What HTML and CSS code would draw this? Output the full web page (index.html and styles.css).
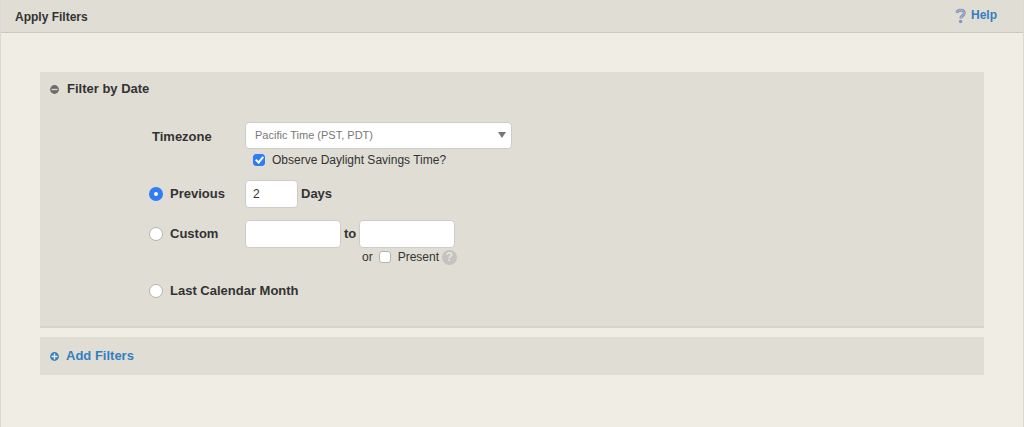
FILE: index.html
```
<!DOCTYPE html>
<html lang="en">
<head>
<meta charset="utf-8">
<meta name="viewport" content="width=device-width, initial-scale=1">
<title>Apply Filters</title>
<link rel="stylesheet" href="styles.css">
</head>
<body>
<div class="frame">
  <header class="topbar">
    <h1 class="title">Apply Filters</h1>
    <a class="help" href="#help">
      <svg class="help-icon" width="12" height="16" viewBox="0 0 12 16" aria-hidden="true">
        <path d="M2 5C2.200 3 3.600 2.200 5.600 2.200c2.200 0 3.700 1 3.700 2.900 0 2.700-3.500 2.500-3.500 5.300" fill="none" stroke="#8496b8" stroke-width="3"/>
        <path d="M2 4.700C2.200 3 3.600 2.200 5.600 2.200c2.200 0 3.700 1 3.700 2.900 0 2.700-3.500 2.500-3.500 5" fill="none" stroke="#b3bed0" stroke-width="1"/>
        <circle cx="5.600" cy="13.500" r="1.700" fill="#8496b8"/>
      </svg>
      <span>Help</span>
    </a>
  </header>
  <main class="content">
    <section class="panel panel-date">
      <h2 class="panel-title">
        <button class="toggle" type="button" aria-label="Collapse date filter">
          <svg width="9" height="9" viewBox="0 0 9 9" aria-hidden="true"><circle cx="4.500" cy="4.500" r="4.400" fill="#6b6b6b"/><path d="M1.500 4.500h6" stroke="#d8d6d0" stroke-width="1.400"/></svg>
        </button>
        <span>Filter by Date</span>
      </h2>
      <form class="form">
        <div class="row">
          <label class="name name-plain" for="timezone">Timezone</label>
          <div class="select-wrap">
            <select class="select" id="timezone"><option>Pacific Time (PST, PDT)</option></select>
          </div>
        </div>
        <div class="subrow">
          <input class="check" type="checkbox" id="dst" checked>
          <label for="dst">Observe Daylight Savings Time?</label>
        </div>
        <div class="row">
          <label class="name"><input class="radio" type="radio" name="range" checked>Previous</label>
          <input class="field field-days" id="days" type="text" value="2">
          <label class="unit" for="days">Days</label>
        </div>
        <div class="row row-custom">
          <label class="name"><input class="radio" type="radio" name="range">Custom</label>
          <input class="field field-date" type="text" aria-label="Start date">
          <label class="unit" for="end">to</label>
          <input class="field field-date" id="end" type="text">
        </div>
        <div class="subrow subrow-present">
          <span>or</span>
          <input class="check" type="checkbox" id="present">
          <label for="present">Present</label>
          <button class="hint" type="button" aria-label="About present">?</button>
        </div>
        <div class="row">
          <label class="name"><input class="radio" type="radio" name="range">Last Calendar Month</label>
        </div>
      </form>
    </section>
    <section class="panel">
      <button class="add" type="button">
        <svg width="9" height="9" viewBox="0 0 9 9" aria-hidden="true"><circle cx="4.500" cy="4.500" r="4.400" fill="#337fc0"/><path d="M1.500 4.500h6M4.500 1.500v6" stroke="#f3f1ea" stroke-width="1.400"/></svg>
        <span>Add Filters</span>
      </button>
    </section>
  </main>
</div>
</body>
</html>
```
FILE: styles.css
```
* {
  box-sizing: border-box;
}

body {
  margin: 0;
  background: #f0ede5;
  color: #333;
  font: 12px/16px "Liberation Sans", Arial, sans-serif;
}

button {
  padding: 0;
  border: 0;
  background: none;
  font: inherit;
  cursor: pointer;
}

.frame {
  min-height: 100vh;
  border: solid #dddad2;
  border-width: 0 1px;
}

.topbar {
  display: flex;
  justify-content: space-between;
  height: 33px;
  padding: 8px 26px 0 14px;
  background: #e0ddd5;
  border-bottom: 1px solid #cbc8c1;
}

.title,
.panel-title {
  margin: 0;
  font-size: 13px;
  line-height: 18px;
}

.title {
  font-size: 12px;
}

.help {
  display: flex;
  gap: 4px;
  height: 16px;
  color: #337fc0;
  font-size: 12px;
  line-height: 14px;
  font-weight: bold;
  text-decoration: none;
}

.content {
  display: flex;
  flex-direction: column;
  gap: 9px;
  padding: 39px;
}

.panel {
  padding: 8px 10px;
  background: #e0ddd5;
}

.panel-date {
  padding-bottom: 26px;
  border-bottom: 2px solid #d7d4cc;
}

.panel-title {
  display: flex;
  align-items: center;
  gap: 8px;
}

.toggle {
  display: flex;
}

.form {
  padding: 24px 0 0 99px;
}

.row {
  display: flex;
  align-items: center;
  gap: 3px;
  font-size: 13px;
  font-weight: bold;
}

.name {
  display: flex;
  align-items: center;
  gap: 7px;
  min-width: 93px;
  white-space: nowrap;
}

.name-plain {
  padding: 2px 0 0 3px;
}

.select-wrap {
  position: relative;
  width: 267px;
}

.select-wrap::after {
  content: "";
  position: absolute;
  top: 10px;
  right: 6px;
  border: solid transparent;
  border-width: 6px 4px 0;
  border-top-color: #777;
  pointer-events: none;
}

.select {
  display: block;
  appearance: none;
  width: 100%;
  height: 27px;
  padding: 0 24px 2px 9px;
  border: 1px solid #ccc;
  border-radius: 4px;
  background: #fff;
  color: #777;
  font: 11px "Liberation Sans", Arial, sans-serif;
}

.subrow {
  display: flex;
  align-items: center;
  gap: 7px;
  padding: 3px 0 12px 104px;
}

.check {
  appearance: none;
  display: grid;
  justify-content: center;
  width: 12px;
  height: 12px;
  margin: 0;
  border: 1px solid #b5b3ae;
  border-radius: 3px;
  background: #fff;
}

.check:checked {
  border-color: #2f7cf6;
  background: #2f7cf6;
}

.check:checked::after {
  content: "";
  box-sizing: border-box;
  width: 5px;
  height: 8px;
  border: solid #fff;
  border-width: 0 2px 2px 0;
  transform: rotate(40deg);
}

.radio {
  appearance: none;
  flex: none;
  width: 14px;
  height: 14px;
  margin: 0;
  border: 1px solid #b5b3ae;
  border-radius: 50%;
  background: #fff;
}

.radio:checked {
  border: 5px solid #2f7cf6;
}

.field {
  height: 28px;
  padding: 0 7px;
  border: 1px solid #ccc;
  border-radius: 4px;
  background: #fff;
  color: #333;
  font: 12px "Liberation Sans", Arial, sans-serif;
}

.field-days {
  width: 53px;
}

.field-date {
  width: 96px;
}

.row-custom {
  margin-top: 12px;
}

.subrow-present {
  gap: 6px;
  padding: 1px 0 18px 213px;
}

.subrow-present label {
  margin-left: 1px;
}

.hint {
  width: 15px;
  height: 15px;
  margin-left: -3px;
  border-radius: 50%;
  background: #c4c3c0;
  color: #e6e4df;
  font-size: 12px;
  line-height: 15px;
  font-weight: bold;
}

.panel-date {
  padding-bottom: 27px;
}

.add {
  display: flex;
  align-items: center;
  gap: 7px;
  height: 22px;
  color: #337fc0;
  font-size: 13px;
  font-weight: bold;
}
```
